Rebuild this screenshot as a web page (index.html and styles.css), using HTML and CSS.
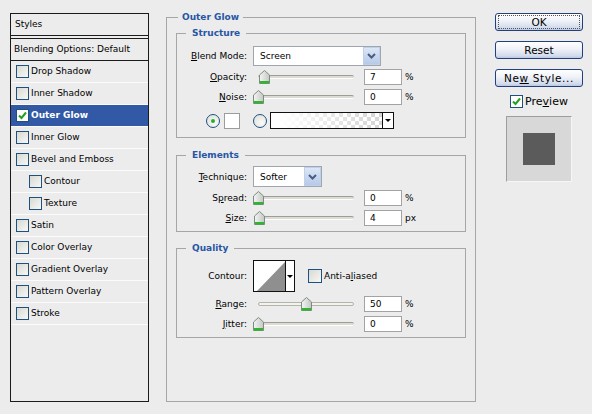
FILE: index.html
```html
<!DOCTYPE html>
<html>
<head>
<meta charset="utf-8">
<title>Layer Style</title>
<link rel="stylesheet" href="styles.css">
</head>
<body>
<div class="dialog">
  <div class="styles">
    <div class="styles-head">Styles</div>
    <div class="styles-blend">Blending Options: Default</div>
    <ul class="fx">
      <li><span class="cb"></span>Drop Shadow</li>
      <li><span class="cb"></span>Inner Shadow</li>
      <li class="sel"><span class="cb on"><svg width="11" height="11" viewBox="0 0 11 11"><path d="M2 5.5 L4.5 8 L9 2.5" fill="none" stroke="#22a022" stroke-width="2"/></svg></span>Outer Glow</li>
      <li><span class="cb"></span>Inner Glow</li>
      <li><span class="cb"></span>Bevel and Emboss</li>
      <li class="sub"><span class="cb"></span>Contour</li>
      <li class="sub"><span class="cb"></span>Texture</li>
      <li><span class="cb"></span>Satin</li>
      <li><span class="cb"></span>Color Overlay</li>
      <li><span class="cb"></span>Gradient Overlay</li>
      <li><span class="cb"></span>Pattern Overlay</li>
      <li><span class="cb"></span>Stroke</li>
    </ul>
  </div>

  <fieldset class="panel">
    <legend>Outer Glow</legend>

    <fieldset class="group structure">
      <legend>Structure</legend>
      <div class="row r-sel">
        <span class="lbl"><u>B</u>lend Mode:</span>
        <div class="select wide"><span class="select-text">Screen</span><span class="select-btn"><svg width="9" height="6" viewBox="0 0 9 6"><path d="M1 1 L4.5 4.5 L8 1" fill="none" stroke="#4a5d80" stroke-width="2"/></svg></span></div>
      </div>
      <div class="row r-num">
        <span class="lbl"><u>O</u>pacity:</span>
        <div class="slider"><span class="track"></span><svg class="thumb" style="--v:7" width="11" height="14" viewBox="0 0 11 14"><defs><linearGradient id="tg" x1="0" y1="0" x2="1" y2="0"><stop offset="0" stop-color="#f4f4f4"/><stop offset="1" stop-color="#c4c8c4"/></linearGradient></defs><path d="M5.5 0.5 L10.5 5 L10.5 13.5 L0.5 13.5 L0.5 5 Z" fill="url(#tg)" stroke="#7d8c80"/><rect x="1" y="11" width="9" height="2.5" fill="#2fb52f"/></svg></div>
        <span class="num">7</span><span class="unit">%</span>
      </div>
      <div class="row r-num">
        <span class="lbl"><u>N</u>oise:</span>
        <div class="slider"><span class="track"></span><svg class="thumb" style="--v:0" width="11" height="14" viewBox="0 0 11 14"><path d="M5.5 0.5 L10.5 5 L10.5 13.5 L0.5 13.5 L0.5 5 Z" fill="url(#tg)" stroke="#7d8c80"/><rect x="1" y="11" width="9" height="2.5" fill="#2fb52f"/></svg></div>
        <span class="num">0</span><span class="unit">%</span>
      </div>
      <div class="row r-color">
        <span class="radio on"></span>
        <span class="swatch"></span>
        <span class="radio second"></span>
        <span class="gradient"><span class="grad-fill"></span><span class="grad-arrow"></span></span>
      </div>
    </fieldset>

    <fieldset class="group elements">
      <legend>Elements</legend>
      <div class="row r-sel2">
        <span class="lbl"><u>T</u>echnique:</span>
        <div class="select narrow"><span class="select-text">Softer</span><span class="select-btn"><svg width="9" height="6" viewBox="0 0 9 6"><path d="M1 1 L4.5 4.5 L8 1" fill="none" stroke="#4a5d80" stroke-width="2"/></svg></span></div>
      </div>
      <div class="row r-num">
        <span class="lbl">S<u>p</u>read:</span>
        <div class="slider"><span class="track"></span><svg class="thumb" style="--v:0" width="11" height="14" viewBox="0 0 11 14"><path d="M5.5 0.5 L10.5 5 L10.5 13.5 L0.5 13.5 L0.5 5 Z" fill="url(#tg)" stroke="#7d8c80"/><rect x="1" y="11" width="9" height="2.5" fill="#2fb52f"/></svg></div>
        <span class="num">0</span><span class="unit">%</span>
      </div>
      <div class="row r-num last">
        <span class="lbl"><u>S</u>ize:</span>
        <div class="slider"><span class="track"></span><svg class="thumb" style="--v:2" width="11" height="14" viewBox="0 0 11 14"><path d="M5.5 0.5 L10.5 5 L10.5 13.5 L0.5 13.5 L0.5 5 Z" fill="url(#tg)" stroke="#7d8c80"/><rect x="1" y="11" width="9" height="2.5" fill="#2fb52f"/></svg></div>
        <span class="num">4</span><span class="unit">px</span>
      </div>
    </fieldset>

    <fieldset class="group quality">
      <legend>Quality</legend>
      <div class="row r-contour">
        <span class="lbl">Contour:</span>
        <span class="contour"><svg class="contour-img" width="31" height="30" viewBox="0 0 31 30"><path d="M3 30 L31 1 L31 30 Z" fill="#8f8f8f"/></svg><span class="contour-arrow"></span></span>
        <span class="cb aa"></span><span class="aa-text">Anti-a<u>l</u>iased</span>
      </div>
      <div class="row r-num">
        <span class="lbl"><u>R</u>ange:</span>
        <div class="slider"><span class="track light"></span><svg class="thumb" style="--v:50" width="11" height="14" viewBox="0 0 11 14"><path d="M5.5 0.5 L10.5 5 L10.5 13.5 L0.5 13.5 L0.5 5 Z" fill="url(#tg)" stroke="#7d8c80"/><rect x="1" y="11" width="9" height="2.5" fill="#2fb52f"/></svg></div>
        <span class="num">50</span><span class="unit">%</span>
      </div>
      <div class="row r-num last">
        <span class="lbl"><u>J</u>itter:</span>
        <div class="slider"><span class="track"></span><svg class="thumb" style="--v:0" width="11" height="14" viewBox="0 0 11 14"><path d="M5.5 0.5 L10.5 5 L10.5 13.5 L0.5 13.5 L0.5 5 Z" fill="url(#tg)" stroke="#7d8c80"/><rect x="1" y="11" width="9" height="2.5" fill="#2fb52f"/></svg></div>
        <span class="num">0</span><span class="unit">%</span>
      </div>
    </fieldset>
  </fieldset>

  <div class="actions">
    <button class="btn default"><span>OK</span></button>
    <button class="btn">Reset</button>
    <button class="btn">Ne<u>w</u> Style...</button>
    <div class="preview-check"><span class="cb on"><svg width="11" height="11" viewBox="0 0 11 11"><path d="M2 5.5 L4.5 8 L9 2.5" fill="none" stroke="#22a022" stroke-width="2"/></svg></span>Pre<u>v</u>iew</div>
    <div class="preview"><span class="preview-square"></span></div>
  </div>
</div>
</body>
</html>
```

FILE: styles.css
```css
* { box-sizing: border-box; }
html, body { margin: 0; padding: 0; }
body {
  background: #ececec;
  font-family: "DejaVu Sans", Verdana, sans-serif;
  font-size: 9px;
  color: #000;
  width: 592px;
  height: 414px;
  overflow: hidden;
}
u { text-decoration: underline; text-underline-offset: 1px; }

.dialog {
  display: flex;
  align-items: flex-start;
  padding: 11px 0 0 10px;
}

/* ---------- left styles list ---------- */
.styles {
  margin-top: 2px;
  width: 139px;
  height: 389px;
  border: 1px solid #1b1b1b;
  background: #ececec;
  flex: none;
}
.styles-head {
  height: 22px;
  line-height: 20px;
  padding-left: 4px;
  border-bottom: 1px solid #1b1b1b;
}
.styles-blend {
  margin-top: 2px;
  height: 23px;
  line-height: 20px;
  padding-left: 3px;
  border-top: 1px solid #1b1b1b;
  border-bottom: 1px solid #1b1b1b;
}
.fx { list-style: none; margin: 0; padding: 0; }
.fx li {
  height: 22px;
  display: flex;
  align-items: center;
  padding-left: 5px;
  padding-bottom: 1px;
  border-bottom: 1px solid #fbfbfb;
}
.fx li.sub { padding-left: 18px; }
.fx li.sel {
  background: #3159a5;
  color: #fff;
  font-weight: bold;
}
.cb {
  width: 13px;
  height: 13px;
  flex: none;
  border: 1px solid #1c5180;
  background: linear-gradient(135deg, #d9d9d3, #f7f7f5);
  margin-right: 2px;
  display: flex;
  align-items: center;
  justify-content: center;
}
.cb.on { background: #fff; }

/* ---------- center panel ---------- */
fieldset { min-width: 0; margin: 0; }
legend {
  font-weight: bold;
  color: #2756a4;
  line-height: 13px;
}
.panel {
  margin-left: 17px;
  width: 310px;
  height: 391px;
  border: 1px solid #a6a6a6;
  padding: 0 9px;
  flex: none;
}
.panel > legend { margin-left: 2px; padding: 0 4px; }
.group {
  border: 1px solid #a6a6a6;
  padding: 0;
}
.group > legend { margin-left: 9px; padding: 0 6px; }
.structure { margin-top: 3px; padding: 6px 0 8px; }
.elements { margin-top: 11px; padding: 4px 0 5px; }
.quality { margin-top: 10px; padding: 5px 0 5px; }

.row { display: flex; align-items: center; }
.lbl { width: 70px; margin-right: 6px; text-align: right; flex: none; }
.r-sel { height: 20px; margin-bottom: 3px; }
.r-sel2 { height: 21px; margin-bottom: 3px; }
.r-num { height: 16px; margin-bottom: 4px; }
.structure .r-num:nth-of-type(3) { margin-bottom: 7px; }
.r-num.last { margin-bottom: 0; }
.r-color { height: 17px; padding-left: 29px; }
.r-contour { height: 32px; margin-bottom: 4px; }

.select {
  display: flex;
  height: 100%;
  border: 1px solid #9fa6ad;
  background: #fff;
}
.select.wide { width: 128px; }
.select.narrow { width: 69px; }
.select-text { flex: 1; padding-left: 6px; align-self: center; }
.select-btn {
  width: 17px;
  flex: none;
  border: 1px solid #bfd0ec;
  background: linear-gradient(#dce6f6, #b6c9e8);
  display: flex;
  align-items: center;
  justify-content: center;
}

.slider {
  position: relative;
  width: 111px;
  height: 16px;
  flex: none;
  display: flex;
  align-items: center;
}
.track {
  margin-left: 5px;
  width: 96px;
  height: 4px;
  border-top: 1px solid #9d9d96;
  border-bottom: 1px solid #fdfdfd;
  background: #dcdcd4;
  border-radius: 2px;
}
.track.light { background: #f3f3ec; border: 1px solid #b4b4ac; }
.thumb {
  position: absolute;
  top: 1px;
  left: calc(var(--v) * 0.96px - 0.5px);
}
.num {
  width: 38px;
  height: 16px;
  border: 1px solid #a3a3a3;
  background: #fff;
  padding-left: 5px;
  line-height: 14px;
  flex: none;
}
.unit { margin-left: 3px; }

.radio {
  width: 14px;
  height: 14px;
  border-radius: 50%;
  border: 1px solid #1c5180;
  background: radial-gradient(circle at 65% 65%, #fafafa, #dcdcd6);
  flex: none;
  display: flex;
  align-items: center;
  justify-content: center;
}
.radio.on::after {
  content: "";
  width: 4px;
  height: 4px;
  border-radius: 50%;
  background: #26b026;
}
.radio.second { margin-left: 13px; }
.swatch {
  width: 16px;
  height: 16px;
  margin-left: 4px;
  border: 1px solid #9c9c9c;
  background: #fff;
  flex: none;
}
.gradient {
  margin-left: 3px;
  width: 124px;
  height: 17px;
  border: 1px solid #111;
  display: flex;
  background: #fff;
}
.grad-fill {
  flex: 1;
  background:
    linear-gradient(to right, #fff 8%, rgba(255,255,255,0) 95%),
    repeating-conic-gradient(#d6d6d6 0 25%, #fff 0 50%) 0 0 / 8px 8px;
}
.grad-arrow {
  width: 11px;
  border-left: 1px solid #111;
  background: #fff;
  display: flex;
  align-items: center;
  justify-content: center;
}
.grad-arrow::after, .contour-arrow::after {
  content: "";
  border-left: 3px solid transparent;
  border-right: 3px solid transparent;
  border-top: 3px solid #000;
}

.contour {
  width: 42px;
  height: 32px;
  border: 1px solid #111;
  background: #fff;
  display: flex;
  flex: none;
}
.contour-img { display: block; }
.contour-arrow {
  flex: 1;
  border-left: 1px solid #111;
  display: flex;
  align-items: center;
  justify-content: center;
}
.cb.aa { margin-left: 13px; width: 14px; height: 14px; }
.aa-text { margin-left: 0; }

/* ---------- right column ---------- */
.actions {
  margin: 2px 0 0 19px;
  width: 88px;
  display: flex;
  flex-direction: column;
  align-items: center;
  flex: none;
}
.btn {
  width: 88px;
  height: 18px;
  margin: 0 0 10px;
  padding: 0;
  border: 1px solid #23407e;
  border-radius: 3px;
  background: linear-gradient(#ffffff, #eef1f7 45%, #d3dced 85%, #bac8e0);
  font-family: "DejaVu Sans", Verdana, sans-serif;
  font-size: 10.5px;
  color: #000;
  line-height: 16px;
}
.btn.default span {
  display: block;
  margin: 2px 3px;
  line-height: 12px;
  outline: 1px dotted #555;
}
.btn:nth-of-type(3) { margin-bottom: 8px; letter-spacing: 0.6px; }
.preview-check {
  display: flex;
  align-items: center;
  height: 13px;
  font-size: 11px;
}
.preview {
  margin-top: 8px;
  width: 66px;
  height: 66px;
  border-top: 1px solid #9d9d9d;
  border-left: 1px solid #9d9d9d;
  border-right: 1px solid #f6f6f6;
  border-bottom: 1px solid #f6f6f6;
  background: #d8d8d8;
  display: flex;
  align-items: center;
  justify-content: center;
}
.preview-square {
  width: 32px;
  height: 32px;
  background: #5b5b5b;
}
```
